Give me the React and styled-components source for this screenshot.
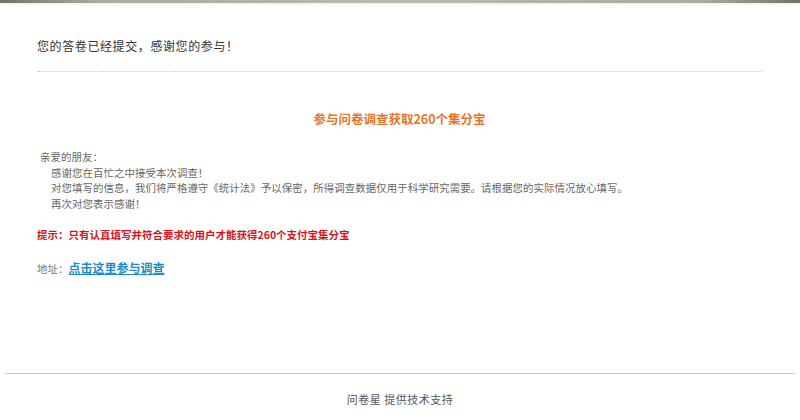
import styled, { createGlobalStyle } from 'styled-components';

const GlobalStyle = createGlobalStyle`
    body {
        margin: 0;
        background: #fff;
        font-family: "Microsoft YaHei", "Noto Sans CJK SC", "Noto Sans", sans-serif;
    }
`;

const TopBar = styled.div`
    height: 3px;
    background: linear-gradient(to right, #6f7266 0%, #a9ab9b 12%, #b9bbaa 50%, #a9ab9b 88%, #6f7266 100%);
    box-shadow: 0 1px 3px rgba(220, 222, 190, 0.6);
`;

const Main = styled.main`
    padding: 33px 38px 0 37px;
`;

const Title = styled.div`
    font-size: 12px;
    line-height: 20px;
    letter-spacing: 0.6px;
    color: #333;
`;

const Divider = styled.div`
    margin: 15px 0 0 1px;
    border-top: 1px dotted #c4c4c4;
`;

const Heading = styled.h2`
    margin: 37px 0 0;
    text-align: center;
    font-size: 12.5px;
    line-height: 20px;
    font-weight: bold;
    color: #e8752a;
`;

const Letter = styled.div`
    margin-top: 20px;
    padding-left: 3px;
    font-size: 10.4px;
    line-height: 15.5px;
    letter-spacing: 0.1px;
    color: #666;
`;

const Line = styled.div`
    padding-left: ${(p) => (p.$indent ? '11px' : '0')};
`;

const Tip = styled.div`
    margin-top: 16px;
    font-size: 10.5px;
    line-height: 16px;
    font-weight: bold;
    color: #d9141b;
`;

const Address = styled.div`
    margin-top: 16px;
    font-size: 10.5px;
    line-height: 18px;
    color: #777;
`;

const SurveyLink = styled.a`
    font-size: 12px;
    font-weight: bold;
    color: #1a8bcb;
    text-decoration: underline;
`;

const Footer = styled.footer`
    margin: 95px 5px 0;
    border-top: 1px solid #cacaca;
    padding-top: 17px;
    text-align: center;
    font-size: 11px;
    line-height: 16px;
    letter-spacing: 0.5px;
    color: #555;
`;

export default function App() {
    return (
        <>
            <GlobalStyle />
            <TopBar />
            <Main>
                <Title>您的答卷已经提交，感谢您的参与！</Title>
                <Divider />
                <Heading>参与问卷调查获取260个集分宝</Heading>
                <Letter>
                    <Line>亲爱的朋友：</Line>
                    <Line $indent>感谢您在百忙之中接受本次调查！</Line>
                    <Line $indent>对您填写的信息，我们将严格遵守《统计法》予以保密，所得调查数据仅用于科学研究需要。请根据您的实际情况放心填写。</Line>
                    <Line $indent>再次对您表示感谢！</Line>
                </Letter>
                <Tip>提示：只有认真填写并符合要求的用户才能获得260个支付宝集分宝</Tip>
                <Address>
                    地址：<SurveyLink href="#">点击这里参与调查</SurveyLink>
                </Address>
            </Main>
            <Footer>问卷星 提供技术支持</Footer>
        </>
    );
}
